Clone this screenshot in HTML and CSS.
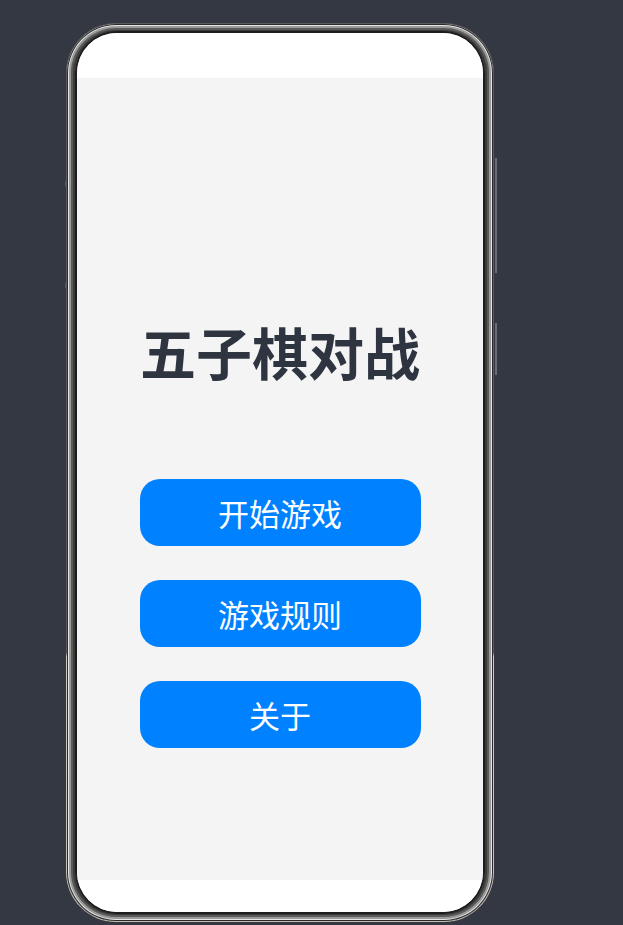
FILE: index.html
```html
<!DOCTYPE html>
<html lang="zh-CN">
<head>
  <meta charset="UTF-8">
  <meta name="viewport" content="width=device-width, initial-scale=1.0">
  <title>五子棋对战</title>
  <link rel="stylesheet" href="styles.css">
</head>
<body>

  <div class="phone">
    <!-- side keys -->
    <span class="key key-power"></span>
    <span class="key key-volume"></span>
    <span class="key key-left-a"></span>
    <span class="key key-left-b"></span>

    <div class="bezel">
      <div class="screen">
        <div class="status-bar"></div>

        <!-- Main menu -->
        <div class="menu">
          <h1 class="game-title">五子棋对战</h1>
          <div class="menu-buttons">
            <button class="menu-btn">开始游戏</button>
            <button class="menu-btn">游戏规则</button>
            <button class="menu-btn">关于</button>
          </div>
        </div>

        <div class="nav-bar"></div>
      </div>
    </div>
  </div>

</body>
</html>
```

FILE: styles.css
```css
/* Menu page inside device frame */
body {
  margin: 0;
  padding: 23px 0 0 66px;
  background-color: #333842;
  font-family: "Noto Sans CJK SC", "Noto Sans", sans-serif;
}

.phone {
  position: relative;
  width: 428px;
  height: 899px;
  box-sizing: border-box;
  padding: 1px;
  border-radius: 50px;
  background: linear-gradient(to bottom, #5c5c5c 0%, #5c5c5c 70%, #d3cbbb 70.5%, #c8c0ae 100%);
}

.bezel {
  height: 100%;
  box-sizing: border-box;
  padding: 9px 10px 9px 10px;
  border-radius: 49px;
  background: #6f6f6f;
  box-shadow: inset 0 0 0 1px #2a2a2a, inset 0 0 0 2px #e6e6e6, inset 0 0 0 4px #9a9a9a, inset 0 0 0 6px #5a5a5a, inset 0 0 0 8px #3a3a3a;
}

.screen {
  display: flex;
  flex-direction: column;
  height: 100%;
  border-radius: 40px;
  overflow: hidden;
  background: #fff;
  box-shadow: 0 0 0 2px #1d1d1d;
}

.status-bar {
  height: 45px;
  background: #fff;
}

.menu {
  flex: 1;
  display: flex;
  flex-direction: column;
  align-items: center;
  padding-top: 245px;
  background: #f4f4f4;
}

.game-title {
  margin: 0;
  font-size: 56px;
  line-height: 56px;
  font-weight: bold;
  color: #2e3541;
}

.menu-buttons {
  display: flex;
  flex-direction: column;
  gap: 34px;
  margin-top: 100px;
}

.menu-btn {
  width: 281px;
  height: 67px;
  border: none;
  border-radius: 20px;
  background-color: #0081ff;
  color: #fff;
  font-family: inherit;
  font-size: 31px;
  cursor: pointer;
}

.nav-bar {
  height: 32px;
  background: #fff;
}

/* side keys */
.key {
  position: absolute;
  width: 2px;
  background: #6a6d73;
}

.key-power {
  right: -3px;
  top: 135px;
  height: 115px;
}

.key-volume {
  right: -3px;
  top: 300px;
  height: 52px;
}

.key-left-a,
.key-left-b {
  left: -1px;
  width: 2px;
  height: 5px;
  background: #55585e;
}

.key-left-a { top: 158px; }
.key-left-b { top: 260px; }
```
